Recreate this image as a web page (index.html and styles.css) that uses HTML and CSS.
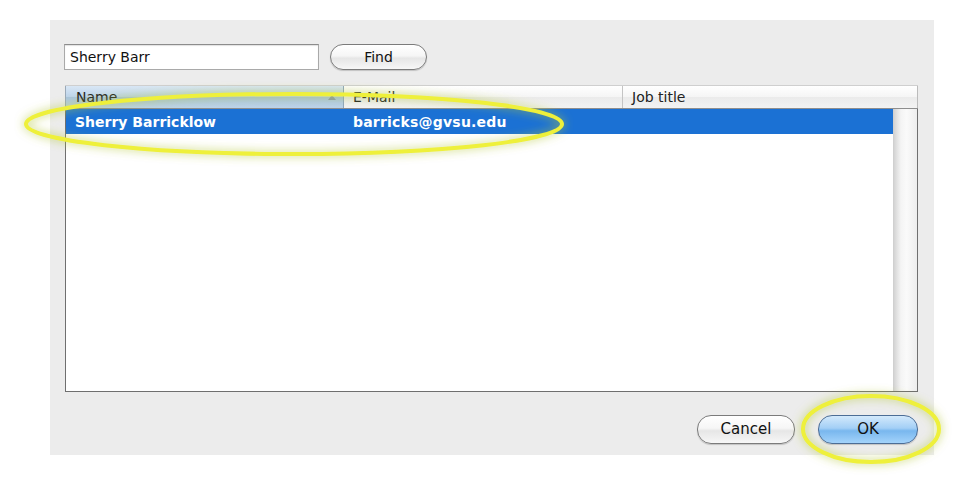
FILE: index.html
```html
<!DOCTYPE html>
<html>
<head>
<meta charset="utf-8">
<link rel="stylesheet" href="styles.css">
</head>
<body>
<div class="page">
  <div class="dialog">
    <div class="search-row">
      <div class="field">Sherry Barr</div>
      <div class="btn find">Find</div>
    </div>
    <div class="table">
      <div class="thead">
        <div class="th th-name">Name<span class="sort"></span></div>
        <div class="th th-mail">E-Mail</div>
        <div class="th th-job">Job title</div>
      </div>
      <div class="tbody">
        <div class="rows">
          <div class="row selected">
            <div class="td td-name">Sherry Barricklow</div>
            <div class="td td-mail">barricks@gvsu.edu</div>
          </div>
        </div>
        <div class="scrollbar"></div>
      </div>
    </div>
    <div class="button-row">
      <div class="btn cancel">Cancel</div>
      <div class="btn ok">OK</div>
    </div>
  </div>
  <svg class="highlights" width="979" height="486" viewBox="0 0 979 486">
    <defs>
      <filter id="glow" x="-20%" y="-50%" width="140%" height="200%">
        <feGaussianBlur in="SourceAlpha" stdDeviation="5" result="b"/>
        <feFlood flood-color="#b4c83a" flood-opacity="0.85"/>
        <feComposite in2="b" operator="in" result="g"/>
        <feMerge><feMergeNode in="g"/><feMergeNode in="SourceGraphic"/></feMerge>
      </filter>
    </defs>
    <ellipse cx="294" cy="124" rx="268" ry="30" fill="none" stroke="#eef03a" stroke-width="4" filter="url(#glow)"/>
    <ellipse cx="871" cy="429" rx="68" ry="33" fill="none" stroke="#eef03a" stroke-width="4" filter="url(#glow)"/>
  </svg>
</div>
</body>
</html>
```

FILE: styles.css
```css
html, body {
  margin: 0;
  padding: 0;
  background: #ffffff;
}

.page {
  position: relative;
  width: 979px;
  height: 486px;
  padding: 20px 0 0 50px;
  box-sizing: border-box;
  font-family: "DejaVu Sans", "Liberation Sans", sans-serif;
  font-size: 14px;
  color: #111;
}

.dialog {
  width: 884px;
  height: 435px;
  background: #ececec;
  box-sizing: border-box;
  padding: 24px 16px 0 15px;
  display: flex;
  flex-direction: column;
}

.search-row {
  display: flex;
  align-items: center;
  gap: 11px;
  height: 26px;
}

.field {
  width: 255px;
  height: 26px;
  box-sizing: border-box;
  background: #fff;
  border: 1px solid #a9a9a9;
  border-top-color: #8c8c8c;
  box-shadow: inset 0 1px 1px rgba(0,0,0,0.12);
  padding: 0 5px;
  line-height: 24px;
  margin-left: -1px;
}

.btn {
  box-sizing: border-box;
  border: 1px solid #7b7b7b;
  border-radius: 14px;
  text-align: center;
  background: linear-gradient(#ffffff, #f6f6f6 45%, #e6e6e6 55%, #f7f7f7);
  box-shadow: 0 1px 1px rgba(0,0,0,0.18);
}

.find {
  width: 97px;
  height: 26px;
  line-height: 24px;
}

.table {
  margin-top: 15px;
  width: 853px;
  height: 307px;
  display: flex;
  flex-direction: column;
}

.thead {
  display: flex;
  height: 24px;
  box-sizing: border-box;
  border-top: 1px solid #cfcfcf;
  border-bottom: 1px solid #8e8e8e;
}

.th {
  position: relative;
  box-sizing: border-box;
  padding-left: 9px;
  line-height: 22px;
  color: #222;
  border-right: 1px solid #c4c4c4;
  background: linear-gradient(#ffffff, #f5f5f5 50%, #ebebeb 52%, #f3f3f3);
}

.th-name {
  width: 279px;
  padding-left: 10px;
  border-left: 1px solid #9aa9b8;
  background: linear-gradient(#d9e7f5, #bcd3ea 50%, #a9c4df 52%, #bdd4ea);
  border-right-color: #8ea6bd;
}

.th-mail {
  width: 279px;
}

.th-job {
  flex: 1;
  border-right: 1px solid #bbbbbb;
}

.sort {
  position: absolute;
  right: 7px;
  top: 9px;
  width: 0;
  height: 0;
  border-left: 4px solid transparent;
  border-right: 4px solid transparent;
  border-bottom: 5px solid #8a9aab;
}

.tbody {
  flex: 1;
  display: flex;
  background: #fff;
  border: 1px solid #6f6f6f;
  border-top: none;
}

.rows {
  flex: 1;
}

.row {
  display: flex;
  height: 25px;
  align-items: center;
}

.selected {
  background: #1b71d4;
  color: #fff;
  font-weight: bold;
}

.td {
  box-sizing: border-box;
  padding-left: 9px;
}

.td-name {
  width: 278px;
}

.td-mail {
  width: 279px;
  letter-spacing: 0.2px;
}

.scrollbar {
  width: 23px;
  border-left: 1px solid #d0d0d0;
  background: linear-gradient(90deg, #d4d4d4, #f4f4f4 30%, #fafafa 55%, #ededed);
}

.button-row {
  display: flex;
  justify-content: flex-end;
  gap: 23px;
  margin-top: 23px;
}

.cancel {
  width: 98px;
  height: 29px;
  line-height: 27px;
  font-size: 15px;
}

.ok {
  width: 100px;
  height: 29px;
  line-height: 27px;
  font-size: 15px;
  border-color: #4c6d96;
  background: linear-gradient(#d3e9fc, #a3cff6 45%, #79b7ee 55%, #a3d3fb);
}

.highlights {
  position: absolute;
  left: 0;
  top: 0;
  pointer-events: none;
}
```
